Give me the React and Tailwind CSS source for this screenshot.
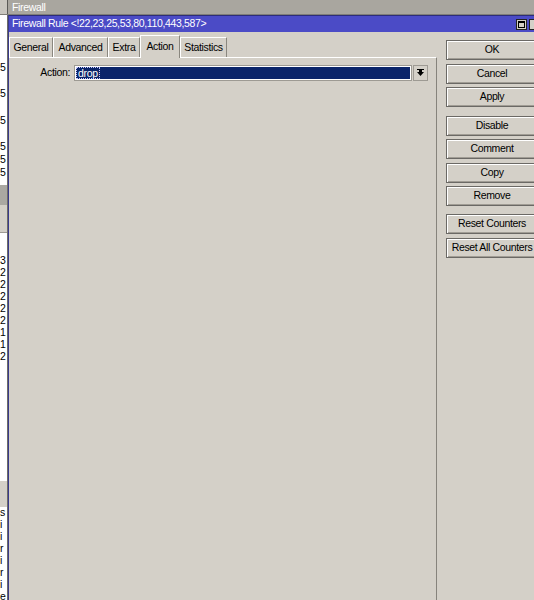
import React from 'react';

const font = { fontFamily: '"Liberation Sans", Arial, sans-serif' };

function Btn({ children, mt }) {
  return (
    <div className={`w-[92px] h-[20px] shrink-0 border border-[#6b6965] bg-[#d4d0c8] flex items-center justify-center text-black whitespace-nowrap shadow-[inset_1px_1px_0_#ffffff,inset_-1px_-1px_0_#a19d95] ${mt}`}>
      {children}
    </div>
  );
}

function Tab({ label, active, w }) {
  if (active) {
    return (
      <div className={`h-[23px] -mb-px flex items-center justify-center bg-[#d4d0c8] border-t border-l border-white border-r border-r-[#8a877f] text-black relative z-10 ${w}`}>
        {label}
      </div>
    );
  }
  return (
    <div className={`h-[20px] flex items-center justify-center bg-[#d4d0c8] border-t border-l border-white border-r border-r-[#8a877f] text-black ${w}`}>
      {label}
    </div>
  );
}

export default function App() {
  return (
    <div className="w-[534px] h-[600px] overflow-hidden bg-[#d4d0c8] flex flex-col text-[10.5px] tracking-[-0.35px]" style={font}>
      {/* outer Firewall window title */}
      <div className="h-[15px] shrink-0 bg-[#a9a69f] flex items-center text-white border-b border-[#7f7d78]">
        <div className="w-[8px] h-full bg-[#c9c6bf] border-r border-[#5b5a56]" />
        <span className="ml-[4px] leading-none">Firewall</span>
      </div>

      <div className="flex flex-1 min-h-0">
        {/* list behind dialog */}
        <div className="w-[8px] shrink-0 bg-white border-r border-[#6d6c68] flex flex-col leading-none text-black overflow-hidden">
          <div className="h-[47px] shrink-0" />
          <div className="h-[13px] shrink-0">5</div>
          <div className="h-[13px] shrink-0" />
          <div className="h-[13px] shrink-0">5</div>
          <div className="h-[14px] shrink-0" />
          <div className="h-[13px] shrink-0">5</div>
          <div className="h-[13px] shrink-0" />
          <div className="h-[13px] shrink-0">5</div>
          <div className="h-[13px] shrink-0">5</div>
          <div className="h-[18px] shrink-0">5</div>
          <div className="h-[20px] shrink-0 bg-[#aaa8a2]" />
          <div className="h-[28px] shrink-0 bg-[#d4d0c8] border-b border-[#9e9b94]" />
          <div className="h-[22px] shrink-0" />
          <div className="h-[12px] shrink-0">3</div>
          <div className="h-[12px] shrink-0">2</div>
          <div className="h-[12px] shrink-0">2</div>
          <div className="h-[12px] shrink-0">2</div>
          <div className="h-[12px] shrink-0">2</div>
          <div className="h-[12px] shrink-0">2</div>
          <div className="h-[12px] shrink-0">1</div>
          <div className="h-[12px] shrink-0">1</div>
          <div className="h-[12px] shrink-0">2</div>
          <div className="h-[118px] shrink-0" />
          <div className="h-[26px] shrink-0 bg-[#d4d0c8]" />
          <div className="h-[12px] shrink-0">s</div>
          <div className="h-[12px] shrink-0">i</div>
          <div className="h-[12px] shrink-0">i</div>
          <div className="h-[12px] shrink-0">r</div>
          <div className="h-[12px] shrink-0">i</div>
          <div className="h-[12px] shrink-0">r</div>
          <div className="h-[12px] shrink-0">i</div>
          <div className="h-[12px] shrink-0">e</div>
        </div>

        {/* dialog */}
        <div className="flex-1 flex flex-col min-w-0 border-l border-[#3a3a8a]">
          <div className="h-[17px] shrink-0 bg-[#4b4bc6] flex items-center text-white pl-[3px] border-t border-[#2c2c7a]">
            <span>Firewall Rule &lt;!22,23,25,53,80,110,443,587&gt;</span>
            <div className="ml-auto flex gap-[2px]">
              <div className="w-[11px] h-[11px] bg-[#d4d0c8] border border-[#222] flex items-center justify-center">
                <div className="w-[7px] h-[7px] border border-black border-t-2" />
              </div>
              <div className="w-[5px] h-[11px] bg-[#d4d0c8] border-l border-y border-[#222]" />
            </div>
          </div>

          <div className="flex flex-1 min-h-0">
            {/* tab area */}
            <div className="w-[428px] shrink-0 flex flex-col pt-[2px]">
              <div className="flex items-end h-[23px] shrink-0">
                <Tab label="General" w="w-[44px]" />
                <Tab label="Advanced" w="w-[55px]" />
                <Tab label="Extra" w="w-[32px]" />
                <Tab label="Action" w="w-[40px]" active />
                <Tab label="Statistics" w="w-[47px]" />
              </div>
              <div className="flex-1 border-t border-white border-r border-r-[#86837c]">
                <div className="flex items-center mt-[7px]">
                  <span className="w-[61px] text-right text-black">Action:</span>
                  <div className="ml-[4px] w-[338px] h-[16px] bg-white border border-[#9d9a93] p-px">
                    <div className="h-full bg-[#0a246a] flex items-center pl-[1px]">
                      <span className="leading-none text-white px-[1px] outline outline-1 outline-dotted outline-[#c8c8ff]">drop</span>
                    </div>
                  </div>
                  <div className="ml-[1px] w-[15px] h-[16px] bg-[#d4d0c8] border border-[#9d9a93] flex items-center justify-center">
                    <svg width="7" height="8" viewBox="0 0 7 8">
                      <rect x="0" y="0" width="7" height="1" fill="#000" />
                      <polygon points="0,3 7,3 3.5,7" fill="#000" />
                      <rect x="2" y="1" width="3" height="2" fill="#000" />
                    </svg>
                  </div>
                </div>
              </div>
            </div>

            {/* button column */}
            <div className="flex-1 flex flex-col pl-[9px] pt-[8px] overflow-hidden">
              <Btn mt="mt-0">OK</Btn>
              <Btn mt="mt-[4px]">Cancel</Btn>
              <Btn mt="mt-[3px]">Apply</Btn>
              <Btn mt="mt-[9px]">Disable</Btn>
              <Btn mt="mt-[3px]">Comment</Btn>
              <Btn mt="mt-[4px]">Copy</Btn>
              <Btn mt="mt-[3px]">Remove</Btn>
              <Btn mt="mt-[8px]">Reset Counters</Btn>
              <Btn mt="mt-[4px]">Reset All Counters</Btn>
            </div>
          </div>
        </div>
      </div>
    </div>
  );
}
